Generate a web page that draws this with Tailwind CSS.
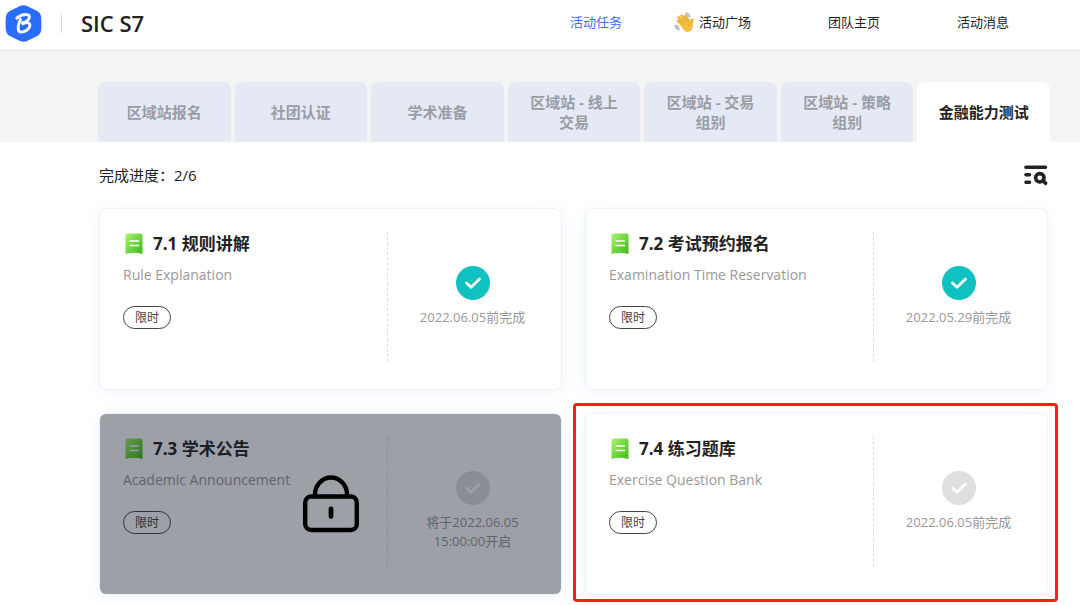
<!DOCTYPE html>
<html lang="zh-CN">
<head>
<meta charset="utf-8">
<meta name="viewport" content="width=device-width, initial-scale=1">
<title>SIC S7</title>
<script src="https://cdn.jsdelivr.net/npm/@tailwindcss/browser@4"></script>
</head>
<body class="min-h-screen bg-white font-['Open_Sans','Noto_Sans_CJK_SC',sans-serif] text-[#222222]">
<svg class="absolute size-0" aria-hidden="true">
  <defs>
    <linearGradient id="green" x1="0" y1="0" x2="1" y2="1">
      <stop offset="0" stop-color="#a5f66c"/><stop offset="1" stop-color="#3cb912"/>
    </linearGradient>
    <symbol id="bookmark" viewBox="0 0 18 22">
      <path d="M2.500 0.500h13a2 2 0 0 1 2 2v18.600q-8.500-2.600-17 0V2.500a2 2 0 0 1 2-2z" fill="url(#green)"/>
      <path d="M5 8h8.500M5 12.500h8.500" stroke="#fff" stroke-width="1.500" stroke-linecap="round"/>
    </symbol>
    <symbol id="check" viewBox="0 0 34 34">
      <circle cx="17" cy="17" r="17" fill="currentColor"/>
      <path d="M10.500 17l4.500 4.200 8.500-8.200" fill="none" stroke="#fff" stroke-width="2.800" stroke-linecap="round" stroke-linejoin="round"/>
    </symbol>
  </defs>
</svg>

<header class="flex h-[51px] items-center justify-between border-b border-[#e6e6e6] bg-white pb-1 pl-[5px] pr-[71px]">
  <div class="flex items-center">
    <svg class="size-[37px]" viewBox="0 0 37 37" role="img" aria-label="Logo">
      <path d="M14.500 1.300q4-2 8 0l9.200 4.400q4 2 4.400 6.300.6 6.500 0 13-.4 4.300-4.400 6.300l-9.200 4.400q-4 2-8 0l-9.200-4.400q-4-2-4.400-6.300-.6-6.500 0-13 .4-4.300 4.400-6.300z" fill="#2a6cfb"/>
      <path d="M11.800 13.200c3.200-2.800 7.800-4.200 11-3.400 2.600.8 1.700 4.200-.4 5.900-1.300 1.100-3 1.800-5 2.100M15.400 14.600c-1.500 3.200-2.700 7.300-2 10.600.7 2.700 4.800 2.300 7.900.3 2.900-1.900 4.500-4.900 3.100-6.800-1.100-1.300-3.800-1.200-6.400.1" fill="none" stroke="#fff" stroke-width="2.900" stroke-linecap="round" stroke-linejoin="round"/>
    </svg>
    <span class="ml-[19px] h-[19px] w-px bg-[#dddddd]"></span>
    <h1 class="ml-[19px] text-[22px] leading-7 font-semibold">SIC S7</h1>
  </div>
  <nav class="flex items-center gap-[77px] pb-0.5 text-[13px] leading-5">
    <a href="#" class="text-[#3b6ffb]">活动任务</a>
    <a href="#" class="-ml-[25px] flex items-center gap-1">
      <svg class="size-[21px]" viewBox="0 0 21 21" aria-hidden="true">
        <g fill="none" stroke="#b9c0c6" stroke-width="1.800" stroke-linecap="round">
          <path d="M12.200 1.300c1.800.3 3 1.400 3.300 3.200M1.300 13.500c.3 2 1.700 3.600 3.700 4.100M12 3.200c.8.200 1.400.7 1.600 1.500M3.100 13.700c.3 1 .9 1.600 1.700 1.900"/>
        </g>
        <g fill="none" stroke="#f3b93a" stroke-width="3" stroke-linecap="round">
          <path d="M4.200 9l6 6M4.700 5.500l7.300 7.300M7.700 3.800l6.300 6.500M11.300 4.600l4 5.400M18.300 7.800q-1.200 2-.9 5"/>
        </g>
        <path d="M6.200 12l8.600-5.400c2 2.700 3.400 3.800 3.900 6.300.6 3.700-1.800 6.800-5 7-3.200.2-5.500-3.400-7.500-7.900z" fill="#f6bd3f"/>
        <path d="M5.300 8.400l4 4M7.500 6.600l4.200 4.300M10.400 5.700l3.500 3.800M17.300 11c-1.300-.3-3 1.200-2.600 3.300" fill="none" stroke="#d99a28" stroke-width=".6" stroke-linecap="round"/>
      </svg>活动广场</a>
    <a href="#">团队主页</a>
    <a href="#">活动消息</a>
  </nav>
</header>

<div class="bg-[#f4f4f4] pl-[98px] pr-[30px] pt-[31px]">
  <div role="tablist" aria-label="任务阶段" class="grid grid-cols-7 gap-1 text-[15px] leading-5 font-bold">
    <button role="tab" aria-selected="false" class="h-[60px] rounded-t-lg bg-[#e5e9f4] px-4 text-[#999da5]">区域站报名</button>
    <button role="tab" aria-selected="false" class="h-[60px] rounded-t-lg bg-[#e5e9f4] px-4 text-[#999da5]">社团认证</button>
    <button role="tab" aria-selected="false" class="h-[60px] rounded-t-lg bg-[#e5e9f4] px-4 text-[#999da5]">学术准备</button>
    <button role="tab" aria-selected="false" class="h-[60px] rounded-t-lg bg-[#e5e9f4] px-4 text-[#999da5]">区域站 - 线上<br>交易</button>
    <button role="tab" aria-selected="false" class="h-[60px] rounded-t-lg bg-[#e5e9f4] px-4 text-[#999da5]">区域站 - 交易<br>组别</button>
    <button role="tab" aria-selected="false" class="h-[60px] rounded-t-lg bg-[#e5e9f4] px-4 text-[#999da5]">区域站 - 策略<br>组别</button>
    <button role="tab" aria-selected="true" class="h-[60px] rounded-t-lg bg-white px-4 text-[#222222]">金融能力测试</button>
  </div>
</div>

<main class="pb-2 pl-[99px] pr-8">
  <div class="flex h-[66px] items-center justify-between">
    <p class="text-[15px] leading-5">完成进度：2/6</p>
    <button aria-label="筛选" class="text-[#222222]">
      <svg class="size-6" viewBox="0 0 24 24" fill="none" stroke="currentColor" stroke-linecap="round" aria-hidden="true">
        <path d="M2 4.300h19.500M2 11.800h3.500M2 19.300h3.500" stroke-width="3.600"/>
        <circle cx="15.800" cy="14.800" r="4.200" stroke-width="3.600"/>
        <path d="M19.500 18l2 2.300" stroke-width="3.600"/>
      </svg>
    </button>
  </div>

  <div class="grid grid-cols-2 gap-[23px]">
    <article class="flex h-[182px] rounded-lg border border-[#edf1fa] bg-white py-[23px] pl-[23px] pr-1 shadow-[0_2px_16px_rgba(80,120,200,0.08)]">
      <div class="min-w-0 flex-1">
        <h2 class="flex items-center gap-2.5 text-[17px] leading-6 font-bold"><svg class="ml-0.5 h-[22px] w-[18px]" aria-hidden="true"><use href="#bookmark"/></svg><span>7.1 规则讲解</span></h2>
        <p class="mt-[9px] text-[14px] leading-5 text-[#999999]">Rule Explanation</p>
        <span class="mt-[21px] flex h-[23px] w-12 items-center justify-center rounded-full border border-[#444444] text-[12px] leading-4 text-[#444444]">限时</span>
      </div>
      <div class="flex h-[130px] w-[170px] flex-col items-center border-l border-dashed border-[#dddddd] pt-[34px] text-center">
        <svg class="size-[34px] text-[#0fc1c1]" role="img" aria-label="已完成"><use href="#check"/></svg>
        <p class="mt-2 text-[13px] leading-[19px] text-[#999999]">2022.06.05前完成</p>
      </div>
    </article>

    <article class="flex h-[182px] rounded-lg border border-[#edf1fa] bg-white py-[23px] pl-[23px] pr-1 shadow-[0_2px_16px_rgba(80,120,200,0.08)]">
      <div class="min-w-0 flex-1">
        <h2 class="flex items-center gap-2.5 text-[17px] leading-6 font-bold"><svg class="ml-0.5 h-[22px] w-[18px]" aria-hidden="true"><use href="#bookmark"/></svg><span>7.2 考试预约报名</span></h2>
        <p class="mt-[9px] text-[14px] leading-5 text-[#999999]">Examination Time Reservation</p>
        <span class="mt-[21px] flex h-[23px] w-12 items-center justify-center rounded-full border border-[#444444] text-[12px] leading-4 text-[#444444]">限时</span>
      </div>
      <div class="flex h-[130px] w-[170px] flex-col items-center border-l border-dashed border-[#dddddd] pt-[34px] text-center">
        <svg class="size-[34px] text-[#0fc1c1]" role="img" aria-label="已完成"><use href="#check"/></svg>
        <p class="mt-2 text-[13px] leading-[19px] text-[#999999]">2022.05.29前完成</p>
      </div>
    </article>

    <article class="relative flex h-[182px] rounded-lg border border-[#edf1fa] bg-white py-[23px] pl-[23px] pr-1 shadow-[0_2px_16px_rgba(80,120,200,0.08)]">
      <div class="min-w-0 flex-1">
        <h2 class="flex items-center gap-2.5 text-[17px] leading-6 font-bold"><svg class="ml-0.5 h-[22px] w-[18px]" aria-hidden="true"><use href="#bookmark"/></svg><span>7.3 学术公告</span></h2>
        <p class="mt-[9px] text-[14px] leading-5 text-[#999999]">Academic Announcement</p>
        <span class="mt-[21px] flex h-[23px] w-12 items-center justify-center rounded-full border border-[#444444] text-[12px] leading-4 text-[#444444]">限时</span>
      </div>
      <div class="flex h-[130px] w-[170px] flex-col items-center border-l border-dashed border-[#dddddd] pt-[34px] text-center">
        <svg class="size-[34px] text-[#dfdfdf]" role="img" aria-label="未完成"><use href="#check"/></svg>
        <p class="mt-2 text-[13px] leading-[19px] text-[#999999]">将于2022.06.05<br>15:00:00开启</p>
      </div>
      <div class="absolute inset-0 flex items-center justify-center rounded-md bg-[#13192b]/41">
        <svg class="h-[58px] w-14" viewBox="0 0 56 58" fill="none" stroke="#000" role="img" aria-label="未开启">
          <rect x="2.200" y="21.500" width="51.600" height="33.500" rx="6" stroke-width="4.400"/>
          <path d="M12 22v-2.500a16 17 0 0 1 32 0V22" stroke-width="4.400"/>
          <path d="M28 34v7.500" stroke-width="4.800" stroke-linecap="round"/>
        </svg>
      </div>
    </article>

    <article class="relative flex h-[182px] rounded-lg border border-[#edf1fa] bg-white py-[23px] pl-[23px] pr-1 shadow-[0_2px_16px_rgba(80,120,200,0.08)]">
      <div class="min-w-0 flex-1">
        <h2 class="flex items-center gap-2.5 text-[17px] leading-6 font-bold"><svg class="ml-0.5 h-[22px] w-[18px]" aria-hidden="true"><use href="#bookmark"/></svg><span>7.4 练习题库</span></h2>
        <p class="mt-[9px] text-[14px] leading-5 text-[#999999]">Exercise Question Bank</p>
        <span class="mt-[21px] flex h-[23px] w-12 items-center justify-center rounded-full border border-[#444444] text-[12px] leading-4 text-[#444444]">限时</span>
      </div>
      <div class="flex h-[130px] w-[170px] flex-col items-center border-l border-dashed border-[#dddddd] pt-[34px] text-center">
        <svg class="size-[34px] text-[#dfdfdf]" role="img" aria-label="未完成"><use href="#check"/></svg>
        <p class="mt-2 text-[13px] leading-[19px] text-[#999999]">2022.06.05前完成</p>
      </div>
      <div class="pointer-events-none absolute -top-[11px] -right-[11px] -bottom-2 -left-[13px] rounded-sm border-3 border-[#ff1d12]"></div>
    </article>
  </div>
</main>
</body>
</html>
